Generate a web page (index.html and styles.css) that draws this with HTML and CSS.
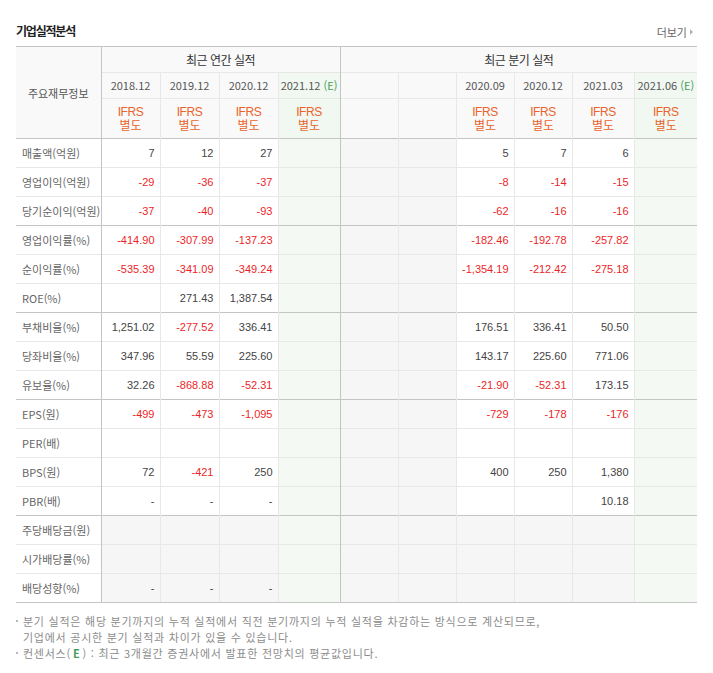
FILE: index.html
```html
<!DOCTYPE html>
<html lang="ko">
<head>
<meta charset="utf-8">
<title>기업실적분석</title>
<link rel="stylesheet" href="styles.css">
</head>
<body>
<div class="page">
  <div class="head">
    <h2 class="title">기업실적분석</h2>
    <a class="more">더보기<span class="arr"></span></a>
  </div>
  <table class="fin">
    <colgroup>
      <col style="width:85px"><col style="width:59px"><col style="width:59px"><col style="width:59px"><col style="width:62px">
      <col style="width:58px"><col style="width:58px"><col style="width:58px"><col style="width:58px"><col style="width:62px"><col style="width:63px">
    </colgroup>
    <thead>
      <tr class="h1">
        <th rowspan="3" class="lbl lbl-h">주요재무정보</th>
        <th colspan="4" class="grp">최근 연간 실적</th>
        <th colspan="6" class="grp qs">최근 분기 실적</th>
      </tr>
      <tr class="h2">
        <th class="yr">2018.12</th><th class="yr">2019.12</th><th class="yr">2020.12</th><th class="yr g">2021.12 <em>(E)</em></th>
        <th class="qs"></th><th></th><th class="yr">2020.09</th><th class="yr">2020.12</th><th class="yr">2021.03</th><th class="yr g">2021.06 <em>(E)</em></th>
      </tr>
      <tr class="h3">
        <th class="ifrs"><span class="en">IFRS</span><span>별도</span></th><th class="ifrs"><span class="en">IFRS</span><span>별도</span></th><th class="ifrs"><span class="en">IFRS</span><span>별도</span></th><th class="ifrs g"><span class="en">IFRS</span><span>별도</span></th>
        <th class="qs"></th><th></th><th class="ifrs"><span class="en">IFRS</span><span>별도</span></th><th class="ifrs"><span class="en">IFRS</span><span>별도</span></th><th class="ifrs"><span class="en">IFRS</span><span>별도</span></th><th class="ifrs g"><span class="en">IFRS</span><span>별도</span></th>
      </tr>
    </thead>
    <tbody>
      <tr class="sep">
        <td class="lbl">매출액(억원)</td><td>7</td><td>12</td><td>27</td><td class="g"></td>
        <td class="e qs"></td><td class="e"></td><td>5</td><td>7</td><td>6</td><td class="g"></td>
      </tr>
      <tr>
        <td class="lbl">영업이익(억원)</td><td class="m">-29</td><td class="m">-36</td><td class="m">-37</td><td class="g"></td>
        <td class="e qs"></td><td class="e"></td><td class="m">-8</td><td class="m">-14</td><td class="m">-15</td><td class="g"></td>
      </tr>
      <tr>
        <td class="lbl">당기순이익(억원)</td><td class="m">-37</td><td class="m">-40</td><td class="m">-93</td><td class="g"></td>
        <td class="e qs"></td><td class="e"></td><td class="m">-62</td><td class="m">-16</td><td class="m">-16</td><td class="g"></td>
      </tr>
      <tr class="sep">
        <td class="lbl">영업이익률(%)</td><td class="m">-414.90</td><td class="m">-307.99</td><td class="m">-137.23</td><td class="g"></td>
        <td class="e qs"></td><td class="e"></td><td class="m">-182.46</td><td class="m">-192.78</td><td class="m">-257.82</td><td class="g"></td>
      </tr>
      <tr>
        <td class="lbl">순이익률(%)</td><td class="m">-535.39</td><td class="m">-341.09</td><td class="m">-349.24</td><td class="g"></td>
        <td class="e qs"></td><td class="e"></td><td class="m">-1,354.19</td><td class="m">-212.42</td><td class="m">-275.18</td><td class="g"></td>
      </tr>
      <tr>
        <td class="lbl">ROE(%)</td><td></td><td>271.43</td><td>1,387.54</td><td class="g"></td>
        <td class="e qs"></td><td class="e"></td><td></td><td></td><td></td><td class="g"></td>
      </tr>
      <tr class="sep">
        <td class="lbl">부채비율(%)</td><td>1,251.02</td><td class="m">-277.52</td><td>336.41</td><td class="g"></td>
        <td class="e qs"></td><td class="e"></td><td>176.51</td><td>336.41</td><td>50.50</td><td class="g"></td>
      </tr>
      <tr>
        <td class="lbl">당좌비율(%)</td><td>347.96</td><td>55.59</td><td>225.60</td><td class="g"></td>
        <td class="e qs"></td><td class="e"></td><td>143.17</td><td>225.60</td><td>771.06</td><td class="g"></td>
      </tr>
      <tr>
        <td class="lbl">유보율(%)</td><td>32.26</td><td class="m">-868.88</td><td class="m">-52.31</td><td class="g"></td>
        <td class="e qs"></td><td class="e"></td><td class="m">-21.90</td><td class="m">-52.31</td><td>173.15</td><td class="g"></td>
      </tr>
      <tr class="sep">
        <td class="lbl">EPS(원)</td><td class="m">-499</td><td class="m">-473</td><td class="m">-1,095</td><td class="g"></td>
        <td class="e qs"></td><td class="e"></td><td class="m">-729</td><td class="m">-178</td><td class="m">-176</td><td class="g"></td>
      </tr>
      <tr>
        <td class="lbl">PER(배)</td><td></td><td></td><td></td><td class="g"></td>
        <td class="e qs"></td><td class="e"></td><td></td><td></td><td></td><td class="g"></td>
      </tr>
      <tr>
        <td class="lbl">BPS(원)</td><td>72</td><td class="m">-421</td><td>250</td><td class="g"></td>
        <td class="e qs"></td><td class="e"></td><td>400</td><td>250</td><td>1,380</td><td class="g"></td>
      </tr>
      <tr>
        <td class="lbl">PBR(배)</td><td>-</td><td>-</td><td>-</td><td class="g"></td>
        <td class="e qs"></td><td class="e"></td><td></td><td></td><td>10.18</td><td class="g"></td>
      </tr>
      <tr class="sep">
        <td class="lbl">주당배당금(원)</td><td class="e"></td><td class="e"></td><td class="e"></td><td class="g"></td>
        <td class="e qs"></td><td class="e"></td><td class="e"></td><td class="e"></td><td class="e"></td><td class="g"></td>
      </tr>
      <tr>
        <td class="lbl">시가배당률(%)</td><td class="e"></td><td class="e"></td><td class="e"></td><td class="g"></td>
        <td class="e qs"></td><td class="e"></td><td class="e"></td><td class="e"></td><td class="e"></td><td class="g"></td>
      </tr>
      <tr class="last">
        <td class="lbl">배당성향(%)</td><td class="e">-</td><td class="e">-</td><td class="e">-</td><td class="g"></td>
        <td class="e qs"></td><td class="e"></td><td class="e"></td><td class="e"></td><td class="e"></td><td class="g"></td>
      </tr>
    </tbody>
  </table>
  <ul class="notes">
    <li>분기 실적은 해당 분기까지의 누적 실적에서 직전 분기까지의 누적 실적을 차감하는 방식으로 계산되므로,<br>기업에서 공시한 분기 실적과 차이가 있을 수 있습니다.</li>
    <li>컨센서스(<b>E</b>) : 최근 3개월간 증권사에서 발표한 전망치의 평균값입니다.</li>
  </ul>
</div>
</body>
</html>
```

FILE: styles.css
```css
body {
  margin: 0;
  background: #fff;
  font-family: "Liberation Sans", "Noto Sans CJK KR", sans-serif;
  font-size: 11px;
  color: #333;
}

.page {
  padding: 22px 16px 0;
}

.head {
  display: flex;
  justify-content: space-between;
  align-items: flex-end;
  height: 17px;
  margin-bottom: 7px;
}

.title {
  margin: 0;
  font-family: "Noto Sans CJK KR", sans-serif;
  font-size: 12px;
  font-weight: bold;
  letter-spacing: -1.2px;
  line-height: 17px;
  color: #222;
}

.more {
  display: flex;
  align-items: center;
  gap: 3px;
  padding-right: 4px;
  font-family: "Noto Sans CJK KR", sans-serif;
  font-size: 11px;
  line-height: 14px;
  color: #666;
}

.arr {
  width: 0;
  height: 0;
  border-left: 3px solid #b0b0b0;
  border-top: 3px solid transparent;
  border-bottom: 3px solid transparent;
}

.fin {
  width: 681px;
  border-collapse: collapse;
  table-layout: fixed;
}

.fin th,
.fin td {
  padding: 0;
  border-top: 1px solid #e8e8e8;
  border-left: 1px solid #e8e8e8;
}

.fin th {
  background: #f9f9f9;
  font-weight: normal;
  text-align: center;
  color: #555;
}

.fin .h1 th {
  border-top-color: #c4c4c4;
  height: 25px;
}

.fin .h2 th {
  height: 25px;
}

.fin .h3 th {
  height: 39px;
}

.fin .lbl {
  border-left: 0;
  border-right: 1px solid #c4c4c4;
  text-align: left;
  padding-left: 6px;
  font-family: "Noto Sans CJK KR", sans-serif;
  color: #666;
}

.fin .lbl-h {
  background: #f9f9f9;
  text-align: center;
  padding-left: 0;
  color: #555;
}

.fin .grp {
  font-family: "Noto Sans CJK KR", sans-serif;
  font-size: 12px;
  letter-spacing: -0.5px;
  color: #333;
}

.fin .h2 th.yr {
  height: 23px;
  padding-bottom: 2px;
  font-family: "Noto Sans CJK KR", sans-serif;
  font-size: 11px;
  color: #555;
}

.fin .yr em {
  font-style: normal;
  color: #4a9c5c;
}

.fin .ifrs {
  font-family: "Liberation Sans", "Noto Sans CJK KR", sans-serif;
  font-size: 12px;
  color: #e9642b;
}

.fin .ifrs span {
  display: block;
  line-height: 14px;
}

.fin .ifrs .en {
  letter-spacing: -0.4px;
}

.fin .qs {
  border-left-color: #c4c4c4;
}

.fin th.g {
  background: #f1f7f1;
}

.fin td {
  height: 28px;
  text-align: right;
  padding-right: 5px;
  color: #444;
  background: #fff;
}

.fin td.lbl {
  padding-right: 0;
}

.fin td.g {
  background: #f4f9f4;
}

.fin td.e {
  background: #f6f6f6;
}

.fin td.m {
  color: #ec1f28;
}

.fin .sep td {
  border-top-color: #c4c4c4;
}

.fin .last td {
  border-bottom: 1px solid #c4c4c4;
}

.notes {
  list-style: none;
  margin: 10px 0 0;
  padding: 0;
  font-family: "Noto Sans CJK KR", sans-serif;
  font-size: 11px;
  line-height: 16px;
  letter-spacing: 0.75px;
  color: #8c8c8c;
}

.notes li {
  position: relative;
  padding-left: 7px;
}

.notes li::before {
  content: "";
  position: absolute;
  left: 0;
  top: 7px;
  width: 2px;
  height: 2px;
  background: #b8b8b8;
}

.notes b {
  font-weight: bold;
  margin: 0 2px;
  color: #4a9c5c;
}
```
